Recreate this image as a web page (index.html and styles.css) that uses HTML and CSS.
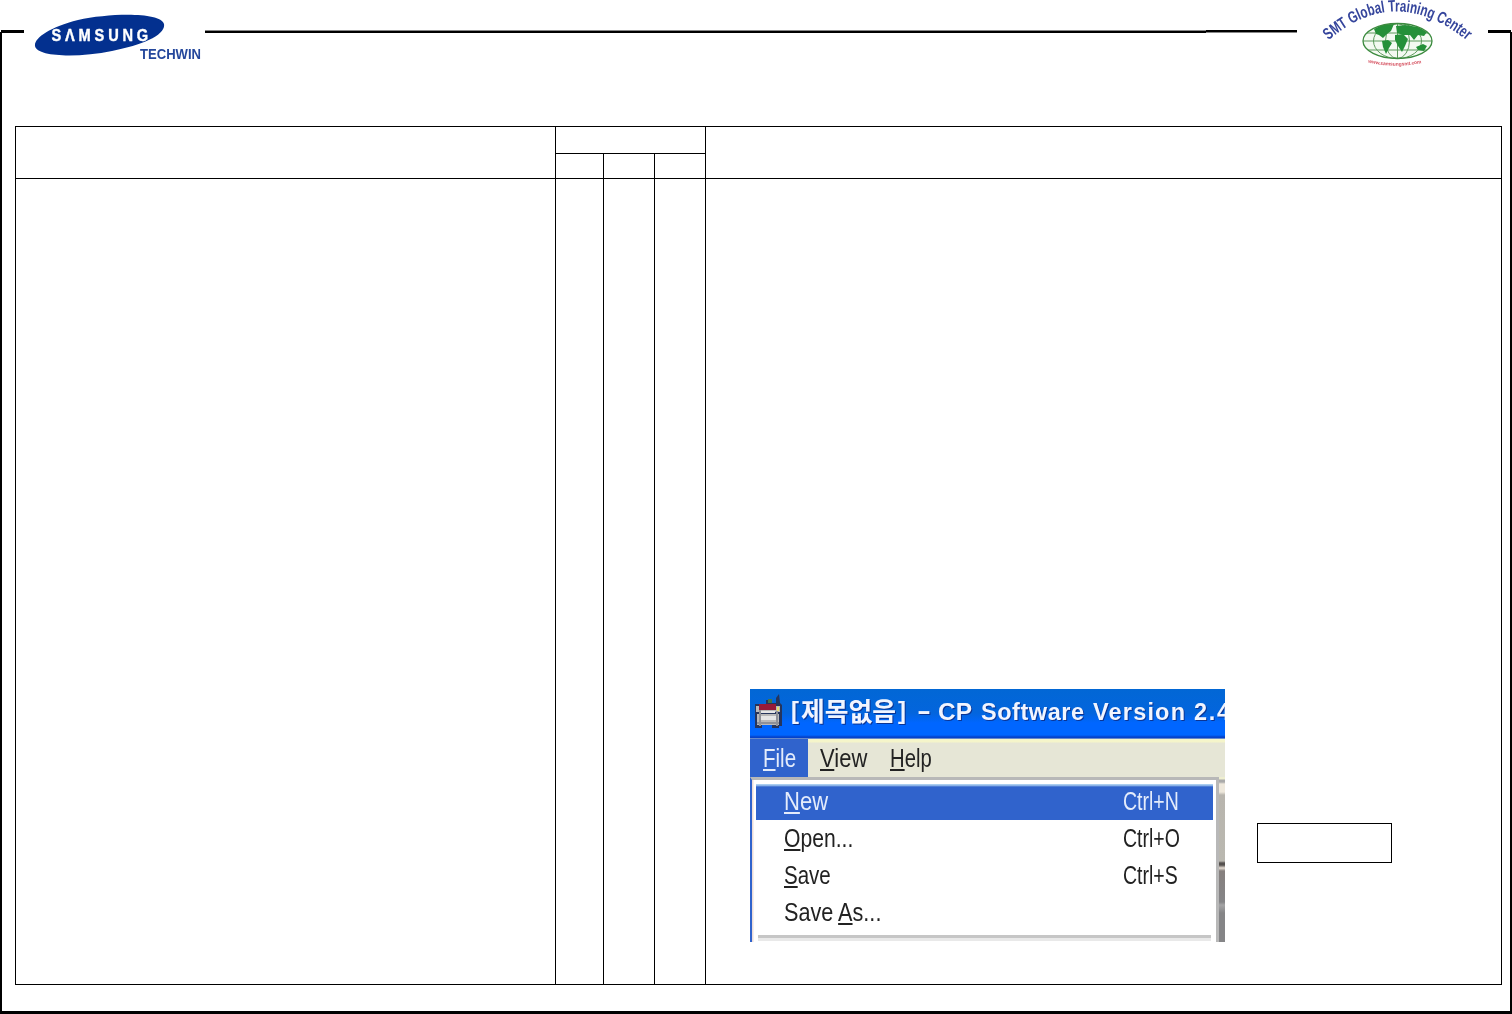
FILE: index.html
```
<!DOCTYPE html>
<html lang="en">
<head>
<meta charset="utf-8">
<title>Samsung Techwin - SMT Global Training Center</title>
<link rel="stylesheet" href="styles.css">
</head>
<body>
<div class="page">
  <header class="header">
    <span class="rule rule-left"></span>
    <svg class="logo" width="181" height="72" viewBox="24 0 181 72" role="img" aria-label="Samsung Techwin">
      <path fill="#03308f" d="M35 46C34 38 50 27 78 20C110 13 161 12 164 24C166 35 143 45 112 51C78 58 37 57 35 46Z"/>
      <text class="logo-name" transform="translate(51.500 41) scale(0.860 1)" textLength="112.500" lengthAdjust="spacing" fill="#fff">SΛMSUNG</text>
      <text class="logo-division" x="140" y="58.500" textLength="61" lengthAdjust="spacingAndGlyphs" fill="#24479c">TECHWIN</text>
    </svg>
    <span class="rule rule-main"></span>
    <span class="rule rule-thin"></span>
    <svg class="logo" width="191" height="72" viewBox="1297 0 191 72" role="img" aria-label="SMT Global Training Center">
      <defs>
        <path id="arc" d="M1328.500 40.500Q1396 -18 1468 41.500"/>
        <path id="smile" d="M1368 62.500Q1396 69 1424 62.500"/>
        <clipPath id="globe"><ellipse cx="1397.500" cy="41" rx="34.500" ry="17.500"/></clipPath>
      </defs>
      <text class="arc-text" fill="#35459c"><textPath href="#arc" textLength="153" lengthAdjust="spacingAndGlyphs">SMT Global Training Center</textPath></text>
      <ellipse cx="1397.500" cy="41" rx="34.500" ry="17.500" fill="#f4faf2"/>
      <g fill="none" stroke="#5c9a5c" stroke-width="1">
        <ellipse cx="1397.500" cy="41" rx="12" ry="17.500"/>
        <ellipse cx="1397.500" cy="41" rx="24" ry="17.500"/>
        <path d="M1397.500 24V58M1363 41H1432M1367 33H1428M1368 50H1427"/>
      </g>
      <g fill="#259039" clip-path="url(#globe)">
        <path d="M1374 29L1382 25L1394 24L1391 31L1387 34L1383 38L1379 35L1376 34Z"/>
        <path d="M1382 41L1388 40L1392 43L1389 48L1386 54L1383 47Z"/>
        <path d="M1396 26L1405 25L1418 27L1427 32L1424 36L1418 35L1414 40L1410 35L1403 35L1397 33Z"/>
        <path d="M1395 35L1403 34L1408 39L1405 46L1402 52L1398 46L1395 40Z"/>
        <path d="M1416 47L1423 44L1427 46L1424 51L1418 50Z"/>
      </g>
      <ellipse cx="1397.500" cy="41" rx="34.500" ry="17.500" fill="none" stroke="#3c8b3f" stroke-width="1.300"/>
      <text class="site" fill="#d5505f"><textPath href="#smile" textLength="54" lengthAdjust="spacingAndGlyphs">www.samsungsmt.com</textPath></text>
    </svg>
    <span class="rule rule-right"></span>
  </header>
  <main class="frame">
    <div class="sheet">
      <div class="cell span-two"></div>
      <div class="cell span-three"></div>
      <div class="cell span-two"></div>
      <div class="cell"></div><div class="cell"></div><div class="cell"></div>
      <div class="cell"></div><div class="cell"></div><div class="cell"></div><div class="cell"></div>
      <div class="cell notes">
        <section class="window">
          <div class="title-bar">
            <svg width="475" height="50" viewBox="750 689 475 50">
              <g>
                <path fill="#26355c" d="M755 704H766V700H772V703H776V698L779 694L780 703L782 705V726H779V728H772V725H762V728H755Z"/>
                <path fill="#b9b9b9" d="M756 706H780V712H756ZM757 714H779V725H757Z"/>
                <path fill="#971b38" d="M759 704H776V710H759Z"/>
                <path fill="#e6e6e6" d="M761 711H775V713H761ZM761 716H776V720H761Z"/>
                <path fill="#8e9097" d="M757 722H779V724H757ZM759 710H761V726H759ZM776 711H778V726H776Z"/>
                <path fill="#43734b" d="M768 699H772V703H768Z"/>
                <path fill="#e8dc6e" d="M777 707H779V711H777Z"/>
              </g>
              <g class="title-text">
                <text x="791" y="719" textLength="8" lengthAdjust="spacingAndGlyphs">[</text>
                <text class="hangul" x="801" y="721" textLength="95" lengthAdjust="spacingAndGlyphs">제목없음</text>
                <text x="898" y="719" textLength="8" lengthAdjust="spacingAndGlyphs">]</text>
                <text x="917" y="719" textLength="14" lengthAdjust="spacingAndGlyphs">-</text>
                <text x="938" y="720" textLength="34" lengthAdjust="spacingAndGlyphs">CP</text>
                <text x="981" y="720" textLength="103" lengthAdjust="spacing">Software</text>
                <text x="1093" y="720" textLength="92" lengthAdjust="spacing">Version</text>
                <text x="1194" y="720" textLength="36" lengthAdjust="spacing">2.4</text>
              </g>
            </svg>
          </div>
          <nav class="menu-bar">
            <span class="menu active"><b class="w-file"><u>F</u>ile</b></span>
            <span class="menu"><b class="w-view"><u>V</u>iew</b></span>
            <span class="menu"><b class="w-help"><u>H</u>elp</b></span>
          </nav>
          <div class="content">
            <div class="dropdown">
              <div class="item selected"><b class="w-new"><u>N</u>ew</b><b class="key">Ctrl+N</b></div>
              <div class="item"><b class="w-open"><u>O</u>pen...</b><b class="key">Ctrl+O</b></div>
              <div class="item"><b class="w-save"><u>S</u>ave</b><b class="key">Ctrl+S</b></div>
              <div class="item"><b class="w-saveas">Save <u>A</u>s...</b></div>
              <div class="separator"></div>
            </div>
            <div class="backdrop"></div>
          </div>
        </section>
        <div class="callout"></div>
      </div>
    </div>
  </main>
</div>
</body>
</html>
```
FILE: styles.css
```
* { box-sizing: border-box; }
body {
  margin: 0;
  background: #fff;
  font-family: "Liberation Sans", "Noto Sans CJK KR", sans-serif;
}
.page { width: 1512px; height: 1014px; overflow: hidden; }

.header { display: flex; height: 32px; padding: 0 1px; }
.rule { height: 3px; margin-top: 30px; background: #000; flex: none; }
.rule-left { width: 23px; }
.rule-main { width: 1001px; background: linear-gradient(#888 1px, #000 1px); }
.rule-thin { width: 91px; background: linear-gradient(#000 2px, #888 2px); }
.rule-right { width: 23px; }
.logo { flex: none; overflow: visible; filter: blur(0.500px); }
.logo-name { font: bold 17px "Liberation Sans", sans-serif; stroke: #fff; stroke-width: 0.400px; }
.logo-division { font: bold 15px "Liberation Sans", sans-serif; }
.arc-text { font: bold 16.500px "Liberation Sans", sans-serif; }
.site { font: bold 5px "Liberation Sans", sans-serif; }

.frame {
  height: 982px;
  padding: 94px 8px 0 13px;
  border: solid #000;
  border-width: 0 2px 3px;
}
.sheet {
  display: grid;
  grid-template-columns: 540px 48px 51px 51px 796px;
  grid-template-rows: 27px 25px 806px;
  width: 1487px;
  height: 859px;
  border: solid #000;
  border-width: 1px 0 0 1px;
}
.cell { border: solid #000; border-width: 0 1px 1px 0; }
.span-two { grid-row: span 2; }
.span-three { grid-column: span 3; }
.notes {
  display: flex;
  align-items: flex-start;
  gap: 32px;
  padding: 510px 0 0 44px;
}

.window {
  width: 475px;
  height: 253px;
  overflow: hidden;
  color: #222;
  background: #fff;
}
.title-bar {
  height: 50px;
  background: linear-gradient(#0267d5 0, #0365dd 24px, #0066ff 34px, #0066ff 46px, #0642c9 48px, #0642c9 49px, #c8d0ce 50px);
}
.title-bar svg { display: block; filter: blur(0.500px); }
.title-text {
  font: bold 23.500px "Liberation Sans", sans-serif;
  fill: #f1f5ff;
  filter: drop-shadow(1.500px 1.500px 0 #0b3494);
}
.hangul { font: bold 26px "Noto Sans CJK KR", sans-serif; }

.menu-bar {
  display: flex;
  height: 38px;
  font-size: 25px;
  line-height: 39px;
  background: linear-gradient(#f5f5ca 3px, #e6e6d6 4px);
}
.menu { width: 70px; padding-left: 12px; }
.active { width: 58px; padding-left: 13px; color: #e4ecfb; background: #3063cc; }
b { display: inline-block; font-weight: 400; transform-origin: 0 50%; white-space: nowrap; filter: blur(0.500px); }
u { text-decoration-thickness: 2px; text-underline-offset: 2px; text-decoration-skip-ink: none; }
.w-file { transform: scaleX(0.820); }
.w-view { transform: scaleX(0.880); }
.w-help { transform: scaleX(0.810); }

.content { display: flex; height: 165px; }
.dropdown {
  width: 469px;
  padding: 4px 2px 0 4px;
  border: solid #b8b8b8;
  border-width: 3px 3px 0 2px;
  border-left-color: #3063cc;
  background: linear-gradient(90deg, #ecdcd8 1px, #fff 2px);
}
.item {
  display: flex;
  height: 37px;
  padding-left: 28px;
  font-size: 25px;
  line-height: 34px;
}
.item > b:first-child { width: 339px; }
.item .key { transform: scaleX(0.780); }
.item > b.w-new { transform: scaleX(0.880); }
.item > b.w-open { transform: scaleX(0.845); }
.item > b.w-save { transform: scaleX(0.820); }
.item > b.w-saveas { transform: scaleX(0.865); }
.selected {
  height: 36px;
  margin-bottom: 1px;
  margin-right: 1px;
  color: #e4ecfb;
  background: linear-gradient(#a9cdf0 1px, #3063cc 3px);
}
.separator { height: 6px; margin: 3px 3px 0 2px; background: linear-gradient(#c6c6c6 3px, #e9e9e9 3px); }
.backdrop {
  width: 6px;
  background: linear-gradient(#eeeecf 0, #eeeecf 2px, #aaa 3px, #aaa 5px, #eee8dc 7px, #eee8dc 15px, #b8b5ae 18px, #bab8b0 84px, #55514f 86px, #55514f 88px, #e6ddd3 91px, #86807e 94px, #858587 125px, #a4a4a5 128px, #858587 136px, #858587 165px);
}
.callout { width: 135px; height: 40px; margin-top: 134px; border: 1px solid #000; }
```
